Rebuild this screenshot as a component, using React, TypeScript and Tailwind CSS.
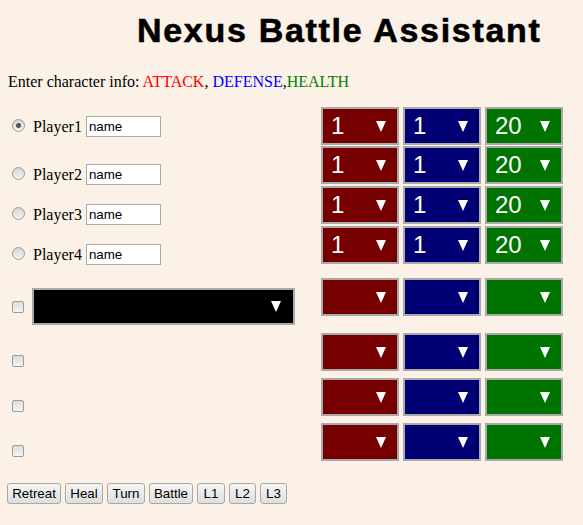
import React from 'react';

// Stat select colours
const ATK = 'bg-[#760000]';
const DEF = 'bg-[#000074]';
const HP = 'bg-[#007400]';

const Arrow: React.FC = () => (
  <svg width="10" height="11" viewBox="0 0 10 11" className="shrink-0">
    <polygon points="0,0 10,0 5,11" fill="#ffffff" />
  </svg>
);

const StatSelect: React.FC<{ color: string; value?: string }> = ({ color, value }) => (
  <div
    className={`${color} w-[78px] h-[38px] border-2 border-[#a9a9a9] flex items-center justify-between pl-[8px] pr-[11px] text-white text-[24px] leading-none font-['Liberation_Sans',Arial,sans-serif]`}
  >
    <span>{value ?? ''}</span>
    <Arrow />
  </div>
);

const StatRow: React.FC<{ values?: boolean; className?: string }> = ({ values, className }) => (
  <div className={`flex gap-[4px] ${className ?? ''}`}>
    <StatSelect color={ATK} value={values ? '1' : undefined} />
    <StatSelect color={DEF} value={values ? '1' : undefined} />
    <StatSelect color={HP} value={values ? '20' : undefined} />
  </div>
);

const Radio: React.FC<{ checked?: boolean }> = ({ checked }) => (
  <div className="w-[13px] h-[13px] rounded-full border border-[#9c9c9c] bg-gradient-to-b from-[#d6d6d6] to-[#f4f4f4] flex items-center justify-center shrink-0">
    {checked && <div className="w-[5px] h-[5px] rounded-full bg-[#555555]" />}
  </div>
);

const Checkbox: React.FC = () => (
  <div className="w-[12px] h-[12px] rounded-[2px] border border-[#9c9c9c] bg-gradient-to-b from-[#dcdcdc] to-[#f4f4f4] shrink-0" />
);

const PlayerRow: React.FC<{ n: number; checked?: boolean; className?: string }> = ({ n, checked, className }) => (
  <div className={`flex items-center h-[21px] ${className ?? ''}`}>
    <div className="ml-[4px] mt-[-3px]">
      <Radio checked={checked} />
    </div>
    <span className="ml-[8px] text-[16px] leading-[18px] font-['Liberation_Serif','Times_New_Roman',serif] text-black">
      Player{n}
    </span>
    <input
      defaultValue="name"
      className="ml-[4px] w-[75px] h-[21px] border border-[#a9a9a9] bg-white px-[2px] text-[13.33px] text-black font-['Liberation_Sans',Arial,sans-serif] outline-none"
    />
  </div>
);

const buttons: { label: string; w: string }[] = [
  { label: 'Retreat', w: 'w-[54px]' },
  { label: 'Heal', w: 'w-[38px]' },
  { label: 'Turn', w: 'w-[38px]' },
  { label: 'Battle', w: 'w-[44px]' },
  { label: 'L1', w: 'w-[28px]' },
  { label: 'L2', w: 'w-[27px]' },
  { label: 'L3', w: 'w-[27px]' },
];

export default function App() {
  return (
    <div className="min-h-[525px] bg-[#fcf1e6] pl-[8px] pt-[10px] font-['Liberation_Serif','Times_New_Roman',serif] text-black">
      <h1 className="pl-[129px] h-[40px] text-[34px] leading-[40px] font-bold tracking-[1.7px] [-webkit-text-stroke:0.6px_#000] font-['Liberation_Sans',Arial,sans-serif]">
        Nexus Battle Assistant
      </h1>

      <p className="mt-[23px] text-[16px] leading-[18px]">
        Enter character info: <span className="text-[#ff0000]">ATTACK</span>,{' '}
        <span className="text-[#0000ff]">DEFENSE</span>,<span className="text-[#008000]">HEALTH</span>
      </p>

      <div className="mt-[16px] flex items-start">
        <div className="w-[313px] flex flex-col pt-[9px]">
          <PlayerRow n={1} checked />
          <PlayerRow n={2} className="mt-[27px]" />
          <PlayerRow n={3} className="mt-[19px]" />
          <PlayerRow n={4} className="mt-[19px]" />

          <div className="mt-[23px] flex items-center">
            <div className="ml-[4px]">
              <Checkbox />
            </div>
            <div className="ml-[8px] w-[263px] h-[37px] bg-black border-2 border-[#a9a9a9] flex items-center justify-end pr-[12px]">
              <Arrow />
            </div>
          </div>

          <div className="mt-[30px] ml-[4px] flex flex-col gap-[33px]">
            <Checkbox />
            <Checkbox />
            <Checkbox />
          </div>
        </div>

        <div className="flex flex-col">
          <StatRow values />
          <StatRow values className="mt-[1px]" />
          <StatRow values className="mt-[2px]" />
          <StatRow values className="mt-[2px]" />
          <StatRow className="mt-[14px]" />
          <StatRow className="mt-[17px]" />
          <StatRow className="mt-[7px]" />
          <StatRow className="mt-[7px]" />
        </div>
      </div>

      <div className="mt-[22px] -ml-[1px] flex gap-[4px]">
        {buttons.map((b) => (
          <button
            key={b.label}
            className={`${b.w} h-[21px] border border-[#a8a8a8] rounded-[3px] bg-gradient-to-b from-[#f6f6f6] to-[#dedede] text-[13.33px] text-black font-['Liberation_Sans',Arial,sans-serif] flex items-center justify-center`}
          >
            {b.label}
          </button>
        ))}
      </div>
    </div>
  );
}
